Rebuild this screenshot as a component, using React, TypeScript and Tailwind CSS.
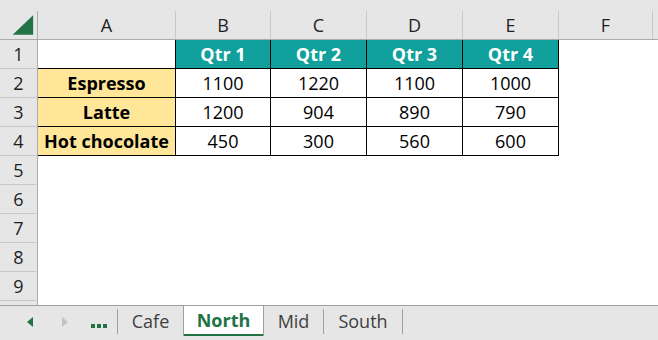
import React from "react"

const cols = [
    { name: "A", w: "w-[138px]" },
    { name: "B", w: "w-[95px]" },
    { name: "C", w: "w-[96px]" },
    { name: "D", w: "w-[96px]" },
    { name: "E", w: "w-[96px]" },
    { name: "F", w: "w-[94px]" },
    { name: "", w: "w-[10px]" },
]

const rows = [
    { label: "Espresso", values: [1100, 1220, 1100, 1000] },
    { label: "Latte", values: [1200, 904, 890, 790] },
    { label: "Hot chocolate", values: [450, 300, 560, 600] },
]

function RowHead({ n }: { n: number | string }) {
    return (
        <div className="w-[38px] shrink-0 h-full bg-[#e6e6e6] border-r border-b border-r-[#ababab] border-b-[#c8c8c8] flex items-center justify-center text-[#1f1f1f]">
            {n}
        </div>
    )
}

export default function App() {
    return (
        <div className="w-[658px] h-[340px] bg-white overflow-hidden flex flex-col font-['Open_Sans',sans-serif] text-[18px] leading-none">
            <div className="h-[305px] shrink-0 overflow-hidden flex flex-col">
                {/* top strip */}
                <div className="h-[11px] shrink-0 bg-[#e6e6e6]"></div>

                {/* column headers */}
                <div className="h-[29px] shrink-0 flex bg-[#e6e6e6] border-b border-[#ababab]">
                    <div className="w-[38px] shrink-0 border-r border-[#ababab] flex">
                        <svg width="38" height="28" viewBox="0 0 38 28">
                            <polygon points="34,4 34,24 13,24" fill="#217346" />
                        </svg>
                    </div>
                    {cols.map((c, i) => (
                        <div key={i} className={`${c.w} shrink-0 border-r border-[#c8c8c8] flex items-center justify-center text-[#1f1f1f]`}>
                            {c.name}
                        </div>
                    ))}
                </div>

                {/* row 1 */}
                <div className="h-[29px] shrink-0 flex">
                    <RowHead n={1} />
                    <div className="w-[138px] shrink-0 border-r border-b border-black"></div>
                    {["Qtr 1", "Qtr 2", "Qtr 3", "Qtr 4"].map((q, i) => (
                        <div key={q} className={`${i === 0 ? "w-[95px]" : "w-[96px]"} shrink-0 bg-[#11a09b] border-r border-b border-black flex items-center justify-center text-white font-bold`}>
                            {q}
                        </div>
                    ))}
                </div>

                {/* data rows */}
                {rows.map((r, ri) => (
                    <div key={r.label} className="h-[29px] shrink-0 flex">
                        <RowHead n={ri + 2} />
                        <div className="w-[138px] shrink-0 bg-[#ffe699] border-r border-b border-black flex items-center justify-center font-bold text-black">
                            {r.label}
                        </div>
                        {r.values.map((v, i) => (
                            <div key={i} className={`${i === 0 ? "w-[95px]" : "w-[96px]"} shrink-0 border-r border-b border-black flex items-center justify-center text-black`}>
                                {v}
                            </div>
                        ))}
                    </div>
                ))}

                {/* empty rows */}
                {[5, 6, 7, 8, 9].map((n) => (
                    <div key={n} className="h-[29px] shrink-0 flex">
                        <RowHead n={n} />
                    </div>
                ))}
                <div className="h-[29px] shrink-0 flex">
                    <RowHead n="" />
                </div>
            </div>

            {/* sheet tabs */}
            <div className="h-[35px] shrink-0 bg-[#e6e6e6] border-t border-[#a0a0a0] flex items-stretch">
                <div className="w-[117px] shrink-0 flex items-center pb-[2px]">
                    <svg className="ml-[27px]" width="7" height="11" viewBox="0 0 7 11">
                        <polygon points="6,0 6,10 0,5" fill="#217346" />
                    </svg>
                    <svg className="ml-[28px]" width="7" height="11" viewBox="0 0 7 11">
                        <polygon points="0,0 0,10 6,5" fill="#c3c3c3" />
                    </svg>
                    <div className="ml-[22px] mt-[7px] flex gap-[2px]">
                        <span className="w-[4px] h-[4px] bg-[#217346]"></span>
                        <span className="w-[4px] h-[4px] bg-[#217346]"></span>
                        <span className="w-[4px] h-[4px] bg-[#217346]"></span>
                    </div>
                </div>
                <div className="w-px mt-[3px] mb-[6px] bg-[#a0a0a0]"></div>
                <div className="w-[65px] shrink-0 flex items-center justify-center pb-[5px] text-[#404040]">Cafe</div>
                <div className="w-[81px] shrink-0 -mt-px mb-[4px] bg-white border border-[#a0a0a0] border-b-0 flex flex-col">
                    <div className="flex-1 flex items-center justify-center font-bold text-[#217346]">North</div>
                    <div className="h-[2px] bg-[#217346]"></div>
                </div>
                <div className="w-[59px] shrink-0 flex items-center justify-center pb-[5px] text-[#404040]">Mid</div>
                <div className="w-px mt-[3px] mb-[6px] bg-[#a0a0a0]"></div>
                <div className="w-[78px] shrink-0 flex items-center justify-center pb-[5px] text-[#404040]">South</div>
                <div className="w-px mt-[3px] mb-[6px] bg-[#a0a0a0]"></div>
            </div>
        </div>
    )
}
